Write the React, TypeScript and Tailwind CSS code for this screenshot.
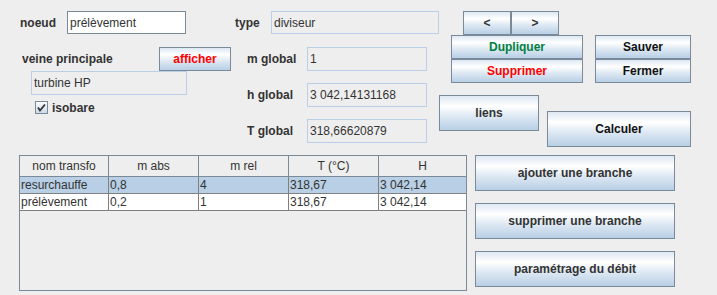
import React from "react";

const btn =
  "flex items-center justify-center border border-[#7a8a99] bg-[linear-gradient(to_bottom,#dde8f3_0%,#ffffff_30%,#dde8f3_60%,#b8cfe5_100%)] font-bold text-[12px] text-[#333333] box-border";

const field =
  "flex items-center box-border border border-[#b8cfe5] bg-[#eeeeee] pl-[2px] text-[12px] text-[#333333]";

function Row({ label, value, mt }: { label: string; value: string; mt: string }) {
  return (
    <div className={`flex items-center h-[24px] ${mt}`}>
      <div className="w-[72px] pl-[12px] font-bold">{label}</div>
      <div className={`${field} w-[120px] h-[24px]`}>{value}</div>
    </div>
  );
}

const cols = ["w-[89px]", "w-[90px]", "w-[90px]", "w-[90px]", "w-[87px]"];
const headers = ["nom transfo", "m abs", "m rel", "T (°C)", "H"];
const rows = [
  { sel: true, cells: ["resurchauffe", "0,8", "4", "318,67", "3 042,14"] },
  { sel: false, cells: ["prélèvement", "0,2", "1", "318,67", "3 042,14"] },
];

export default function App() {
  return (
    <div className="w-[717px] h-[295px] bg-[#eeeeee] overflow-hidden font-['Liberation_Sans',Arial,sans-serif] text-[12px] text-[#333333]">
      <div className="flex h-[155px]">
        {/* left column */}
        <div className="w-[235px] flex flex-col">
          <div className="flex items-center mt-[11px] h-[23px]">
            <div className="w-[67px] pl-[20px] font-bold">noeud</div>
            <div className="flex items-center box-border w-[119px] h-[23px] border border-[#7a8a99] bg-white pl-[2px] text-[#333333]">
              prélèvement
            </div>
          </div>
          <div className="flex items-center mt-[13px] h-[24px]">
            <div className="w-[159px] pl-[22px] font-bold">veine principale</div>
            <div className={`${btn} w-[72px] h-[24px] text-[11px] !text-[#ff0000]`}>afficher</div>
          </div>
          <div className={`${field} ml-[31px] w-[156px] h-[24px]`}>turbine HP</div>
          <div className="flex items-center mt-[6px] ml-[35px] h-[13px]">
            <svg width="13" height="13" viewBox="0 0 13 13">
              <defs>
                <linearGradient id="cb" x1="0" y1="0" x2="0" y2="1">
                  <stop offset="0" stopColor="#ffffff" />
                  <stop offset="1" stopColor="#c8d8ea" />
                </linearGradient>
              </defs>
              <rect x="0.5" y="0.5" width="12" height="12" fill="url(#cb)" stroke="#7a8a99" />
              <path d="M3 6.5 L5 9.5 L10 3.5" fill="none" stroke="#333333" strokeWidth="1.8" />
            </svg>
            <span className="ml-[4px] font-bold">isobare</span>
          </div>
        </div>

        {/* middle column */}
        <div className="w-[204px] flex flex-col">
          <div className="flex items-center mt-[11px] h-[23px]">
            <div className="w-[36px] font-bold">type</div>
            <div className={`${field} w-[168px] h-[23px]`}>diviseur</div>
          </div>
          <Row label="m global" value="1" mt="mt-[13px]" />
          <Row label="h global" value="3 042,14131168" mt="mt-[12px]" />
          <Row label="T global" value="318,66620879" mt="mt-[12px]" />
        </div>

        {/* right column */}
        <div className="flex-1 flex flex-col">
          <div className="flex mt-[11px] ml-[24px]">
            <div className={`${btn} w-[48px] h-[24px]`}>&lt;</div>
            <div className={`${btn} w-[48px] h-[24px]`}>&gt;</div>
          </div>
          <div className="flex ml-[12px]">
            <div className="flex flex-col w-[132px]">
              <div className={`${btn} h-[24px] !text-[#008040]`}>Dupliquer</div>
              <div className={`${btn} h-[24px] !text-[#ff0000]`}>Supprimer</div>
            </div>
            <div className="flex flex-col w-[96px] ml-[12px]">
              <div className={`${btn} h-[24px] !text-[#111111]`}>Sauver</div>
              <div className={`${btn} h-[24px] !text-[#111111]`}>Fermer</div>
            </div>
          </div>
          <div className="flex items-start mt-[12px]">
            <div className={`${btn} w-[100px] h-[36px]`}>liens</div>
            <div className={`${btn} w-[144px] h-[36px] ml-[8px] mt-[16px] !text-[#111111]`}>Calculer</div>
          </div>
        </div>
      </div>

      {/* bottom */}
      <div className="flex">
        <div className="ml-[19px] w-[448px] h-[136px] box-border border border-[#7a8a99] bg-[#eeeeee] flex flex-col">
          <div className="flex h-[21px] border-b border-[#7a8a99] bg-[#eeeeee]">
            {headers.map((h, i) => (
              <div
                key={h}
                className={`${cols[i]} box-border flex items-center justify-center ${i < 4 ? "border-r border-[#7a8a99]" : ""}`}
              >
                {h}
              </div>
            ))}
          </div>
          {rows.map((r, ri) => (
            <div
              key={ri}
              className={`flex h-[16px] border-b border-[#808080] box-content ${r.sel ? "bg-[#b8cfe5]" : "bg-white"}`}
            >
              {r.cells.map((c, i) => (
                <div
                  key={i}
                  className={`${cols[i]} box-border flex items-center pl-[1px] leading-none text-[#333333] ${i < 4 ? "border-r border-[#808080]" : ""}`}
                >
                  {c}
                </div>
              ))}
            </div>
          ))}
        </div>
        <div className="flex flex-col gap-[12px] ml-[8px] w-[200px]">
          <div className={`${btn} h-[36px]`}>ajouter une branche</div>
          <div className={`${btn} h-[36px]`}>supprimer une branche</div>
          <div className={`${btn} h-[36px]`}>paramétrage du débit</div>
        </div>
      </div>
    </div>
  );
}
